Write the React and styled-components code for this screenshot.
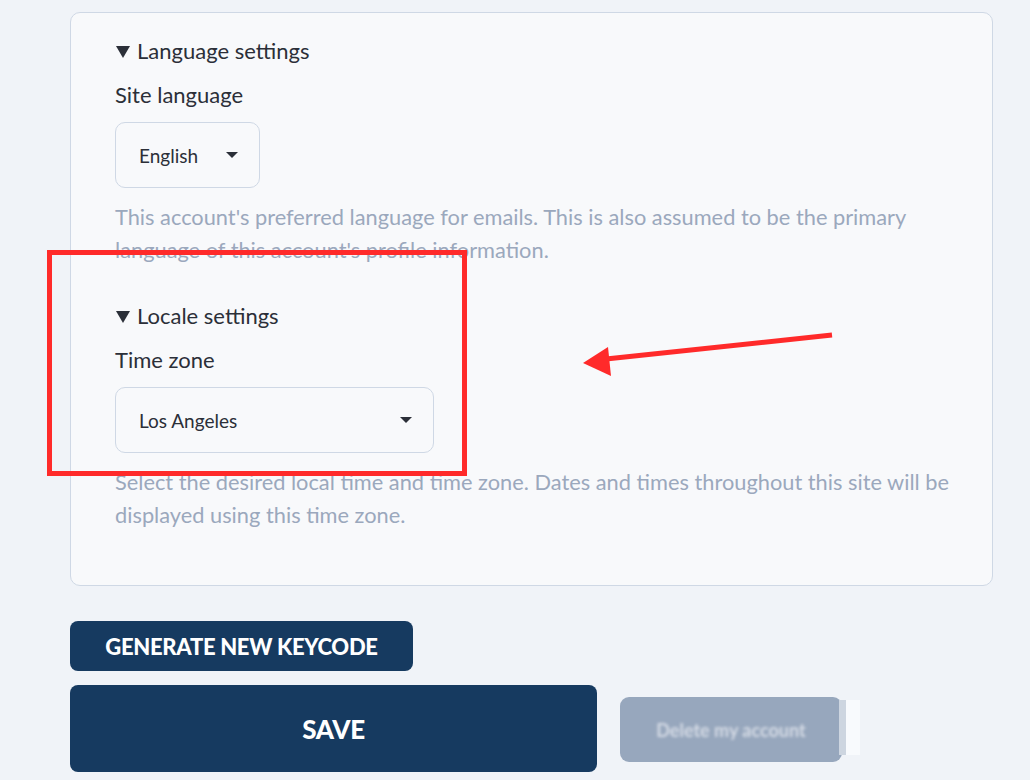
import React from 'react';
import styled, { createGlobalStyle } from 'styled-components';

const GlobalStyle = createGlobalStyle`
  html, body {
    margin: 0;
    padding: 0;
    background: #f0f3f8;
    font-family: Lato, "Open Sans", sans-serif;
    color: #2b2f38;
  }
`;

const StdPage = styled.div`
  position: relative;
  width: 1030px;
  height: 780px;
  overflow: hidden;
  padding: 12px 0 0 70px;
  box-sizing: border-box;
`;

const StdCard = styled.section`
  width: 923px;
  box-sizing: border-box;
  padding: 23px 40px 54px 44px;
  background: #f8f9fb;
  border: 1px solid #cfd8e5;
  border-radius: 10px;
`;

const StdGroup = styled.div`
  & + & {
    margin-top: 35px;
  }
`;

const StdSummary = styled.div`
  display: flex;
  align-items: center;
  gap: 7px;
  font-size: 22px;
  line-height: 30px;
  color: #2b2f38;
`;

const StdMarker = styled.span`
  width: 0;
  height: 0;
  margin-left: 1px;
  margin-top: 1px;
  border-left: 7px solid transparent;
  border-right: 7px solid transparent;
  border-top: 12px solid #2b2f38;
`;

const StdLabel = styled.div`
  margin-top: 14px;
  font-size: 22px;
  line-height: 30px;
`;

const StdSelect = styled.div`
  margin-top: 12px;
  display: ${(props) => (props.$width ? 'flex' : 'inline-flex')};
  align-items: center;
  justify-content: space-between;
  gap: 28px;
  width: ${(props) => (props.$width ? `${props.$width}px` : 'auto')};
  height: 66px;
  box-sizing: border-box;
  padding: 0 21px 0 23px;
  background: #f8f9fb;
  border: 1px solid #cfd8e5;
  border-radius: 10px;
  font-size: 19px;
  color: #2b2f38;
`;

const StdCaret = styled.span`
  width: 0;
  height: 0;
  border-left: 6px solid transparent;
  border-right: 6px solid transparent;
  border-top: 6px solid #2b2f38;
`;

const StdHelp = styled.p`
  margin: 12px 0 0;
  font-size: 21.8px;
  line-height: 33px;
  color: #9ba8bd;
`;

const StdActions = styled.div`
  display: flex;
  flex-direction: column;
  align-items: flex-start;
  gap: 14px;
  margin-top: 35px;
`;

const StdButton = styled.button`
  display: flex;
  align-items: center;
  justify-content: center;
  padding: 0;
  border: none;
  font-family: Lato, sans-serif;
  font-weight: 900;
  text-transform: uppercase;
  color: #ffffff;
  background: #163a60;
  cursor: pointer;
  width: ${(props) => props.$width}px;
  height: ${(props) => props.$height}px;
  border-radius: ${(props) => props.$radius}px;
  font-size: ${(props) => props.$size}px;
  letter-spacing: -0.3px;
`;

const StdSaveRow = styled.div`
  display: flex;
  align-items: center;
  gap: 23px;
`;

const StdGhostButton = styled.div`
  position: relative;
  display: flex;
  align-items: center;
  justify-content: center;
  width: 222px;
  height: 65px;
  margin-top: 2px;
  background: #97a7bd;
  border-radius: 9px;
`;

const StdBlurText = styled.span`
  font-size: 18px;
  font-weight: 700;
  color: #d6dce6;
  filter: blur(1.4px);
`;

const StdGhostEdge = styled.span`
  position: absolute;
  left: 219px;
  top: 3px;
  width: 21px;
  height: 55px;
  background: linear-gradient(90deg, #cdd5e0 0 7px, #f8fafd 7px);
`;

const StdHighlight = styled.div`
  position: absolute;
  left: 47px;
  top: 250px;
  width: 420px;
  height: 226px;
  box-sizing: border-box;
  border: 5px solid #ff2a2a;
  pointer-events: none;
`;

const StdArrow = styled.svg`
  position: absolute;
  left: 570px;
  top: 320px;
  pointer-events: none;
`;

const Section = ({ title, label, value, width, help }) => (
  <StdGroup>
    <StdSummary>
      <StdMarker />
      {title}
    </StdSummary>
    <StdLabel>{label}</StdLabel>
    <StdSelect $width={width}>
      <span>{value}</span>
      <StdCaret />
    </StdSelect>
    <StdHelp>{help}</StdHelp>
  </StdGroup>
);

const App = () => {
  return (
    <StdPage>
      <GlobalStyle />
      <StdCard>
        <Section
          title='Language settings'
          label='Site language'
          value='English'
          help="This account's preferred language for emails. This is also assumed to be the primary language of this account's profile information."
        />
        <Section
          title='Locale settings'
          label='Time zone'
          value='Los Angeles'
          width={319}
          help='Select the desired local time and time zone. Dates and times throughout this site will be displayed using this time zone.'
        />
      </StdCard>

      <StdActions>
        <StdButton $width={343} $height={50} $radius={8} $size={22}>
          Generate new keycode
        </StdButton>
        <StdSaveRow>
          <StdButton $width={527} $height={87} $radius={8} $size={26}>
            Save
          </StdButton>
          <StdGhostButton>
            <StdBlurText>Delete my account</StdBlurText>
            <StdGhostEdge />
          </StdGhostButton>
        </StdSaveRow>
      </StdActions>

      <StdHighlight />
      <StdArrow width='280' height='70' viewBox='0 0 280 70'>
        <line x1='262' y1='15' x2='36' y2='39' stroke='#ff2a2a' strokeWidth='5' />
        <polygon points='13,43 38,27 41,56' fill='#ff2a2a' />
      </StdArrow>
    </StdPage>
  );
};

export default App;
